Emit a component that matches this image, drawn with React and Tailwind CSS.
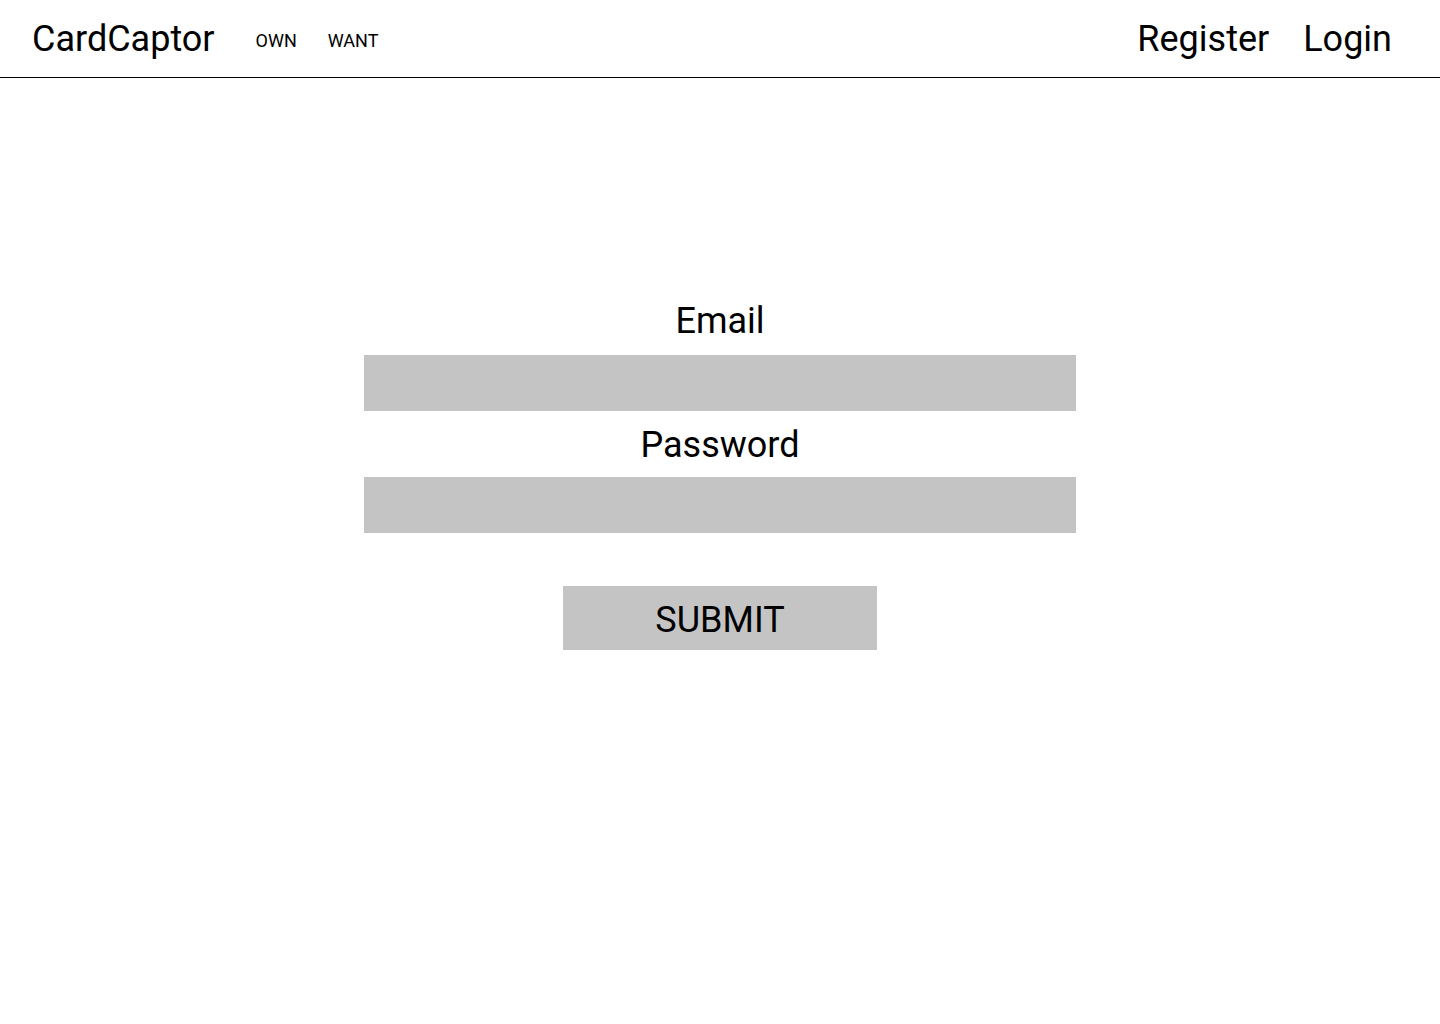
import React from 'react';

const App = () => {
  return (
    <div className="min-h-screen bg-white text-black" style={{ fontFamily: 'Roboto, "Noto Sans", sans-serif' }}>
      {/* Nav bar */}
      <header className="h-[78px] border-b border-black flex items-center justify-between pl-[32px] pr-[48px]">
        <div className="flex items-center">
          <h1 className="text-[36px] leading-[42px] font-normal">CardCaptor</h1>
          <nav className="flex items-center gap-[31px] ml-[41px] mt-[4px]">
            <a className="text-[18px] leading-[21px]">OWN</a>
            <a className="text-[18px] leading-[21px]">WANT</a>
          </nav>
        </div>
        <div className="flex items-center gap-[34px]">
          <a className="text-[36px] leading-[42px]">Register</a>
          <a className="text-[36px] leading-[42px]">Login</a>
        </div>
      </header>

      {/* Login form */}
      <main className="flex flex-col items-center pt-[222px]">
        <label className="text-[36px] leading-[42px]">Email</label>
        <input type="email" className="mt-[13px] w-[712px] h-[56px] bg-[#c4c4c4] outline-none" />
        <label className="mt-[13px] text-[36px] leading-[42px]">Password</label>
        <input type="password" className="mt-[11px] w-[712px] h-[56px] bg-[#c4c4c4] outline-none" />
        <button className="mt-[53px] w-[314px] h-[64px] pt-[4px] bg-[#c4c4c4] text-[36px] leading-[42px]">SUBMIT</button>
      </main>
    </div>
  );
};

export default App;
